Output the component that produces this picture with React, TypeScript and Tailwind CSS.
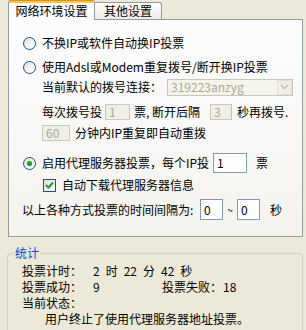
import React from "react";

// XP-style radio button
const Radio = ({ checked }: { checked?: boolean }) => (
  <span className="w-[13px] h-[13px] shrink-0 rounded-full border border-[#1C5180] bg-linear-to-br from-[#DCDCD7] via-[#F4F4F1] to-white flex items-center justify-center">
    {checked && <span className="w-[5px] h-[5px] rounded-full bg-[#21A121] shadow-[0_0_1px_#5ccf5c]" />}
  </span>
);

const CheckBox = () => (
  <span className="w-[13px] h-[13px] shrink-0 border border-[#1C5180] bg-linear-to-br from-[#DCDCD7] to-white flex items-center justify-center">
    <svg width="9" height="9" viewBox="0 0 9 9">
      <path d="M1 4 L3.5 6.5 L8 1.5" stroke="#21A121" strokeWidth="2" fill="none" />
    </svg>
  </span>
);

const Edit = ({
  value,
  disabled,
  className,
}: {
  value: string;
  disabled?: boolean;
  className: string;
}) => (
  <div
    className={`${className} shrink-0 border flex items-center pl-[3px] text-[12px] ${
      disabled
        ? "border-[#C9C7BA] bg-[#F0EFE6] text-[#ACA899]"
        : "border-[#7F9DB9] bg-white text-black"
    }`}
  >
    {value}
  </div>
);

export default function App() {
  return (
    <div className="w-[306px] h-[330px] overflow-hidden bg-[#ECE9D8] text-black text-[12px] leading-[14px] font-['Noto_Sans_CJK_SC',sans-serif]">
      {/* Tabs */}
      <div className="flex items-end pl-[8px] pt-[3px] h-[20px] relative z-10">
        <div className="w-[87px] h-[20px] bg-[#FCFCFE] border-x border-[#919B9C] rounded-t-[3px] flex flex-col">
          <div className="h-[1px] bg-[#E68B2C] rounded-t-[3px]" />
          <div className="h-[2px] bg-[#FFC73C]" />
          <div className="flex-1 flex items-center justify-center pb-[1px]">网络环境设置</div>
        </div>
        <div className="w-[67px] h-[17px] mb-[1px] border-t border-r border-[#919B9C] rounded-tr-[3px] bg-linear-to-b from-white to-[#ECEBE6] flex items-center justify-center">
          其他设置
        </div>
      </div>

      {/* Tab panel */}
      <div className="ml-[8px] w-[295px] h-[218px] -mt-[1px] border border-[#919B9C] bg-linear-to-b from-[#FCFCFE] to-[#F4F3EE] flex flex-col">
        <div className="mt-[13px] h-[20px] flex items-center pl-[14px]">
          <Radio />
          <span className="ml-[6px]">不换IP或软件自动换IP投票</span>
        </div>
        <div className="mt-[4px] h-[20px] flex items-center pl-[14px]">
          <Radio />
          <span className="ml-[6px]">使用Adsl或Modem重复拨号/断开换IP投票</span>
        </div>
        <div className="mt-[1px] h-[18px] flex items-center pl-[33px]">
          <span className="w-[125px]">当前默认的拨号连接：</span>
          <div className="w-[126px] h-[17px] border border-[#C9C7BA] bg-[#F5F4EA] flex items-center">
            <span className="flex-1 pl-[3px] text-[#ACA899]">319223anzyg</span>
            <span className="w-[15px] h-[15px] bg-[#F1EFE5] border border-[#E2E0D6] flex items-center justify-center">
              <svg width="9" height="6" viewBox="0 0 9 6">
                <path d="M1 1 L4.5 4.5 L8 1" stroke="#C4C2B7" strokeWidth="1.6" fill="none" />
              </svg>
            </span>
          </div>
        </div>
        <div className="mt-[7px] h-[18px] flex items-center pl-[33px]">
          <span className="w-[60px]">每次拨号投</span>
          <Edit value="1" disabled className="ml-[3px] w-[25px] h-[16px]" />
          <span className="ml-[4px] w-[72px] whitespace-pre">票, 断开后隔</span>
          <Edit value="3" disabled className="ml-[4px] w-[22px] h-[16px]" />
          <span className="ml-[5px]">秒再拨号.</span>
        </div>
        <div className="mt-[3px] h-[18px] flex items-center pl-[33px]">
          <Edit value="60" disabled className="w-[28px] h-[16px]" />
          <span className="ml-[5px]">分钟内IP重复即自动重拨</span>
        </div>
        <div className="mt-[11px] h-[20px] flex items-center pl-[14px]">
          <Radio checked />
          <span className="ml-[6px] w-[171px]">启用代理服务器投票，每个IP投</span>
          <Edit value="1" className="w-[34px] h-[20px]" />
          <span className="ml-[9px]">票</span>
        </div>
        <div className="mt-[3px] h-[18px] flex items-center pl-[34px]">
          <CheckBox />
          <span className="ml-[6px]">自动下载代理服务器信息</span>
        </div>
        <div className="mt-[5px] h-[21px] flex items-center pl-[13px]">
          <span className="w-[178px]">以上各种方式投票的时间间隔为:</span>
          <Edit value="0" className="w-[23px] h-[21px]" />
          <span className="w-[14px] text-center text-[10px]">~</span>
          <Edit value="0" className="w-[23px] h-[21px]" />
          <span className="ml-[10px]">秒</span>
        </div>
      </div>

      {/* Statistics group */}
      <fieldset className="ml-[7px] mt-[9px] w-[296px] h-[120px] border border-[#D0D0BF] rounded-[4px]">
        <legend className="ml-[6px] px-[1px] text-[#0046D5]">统计</legend>
        <div className="pl-[14px] pt-[3px]">
          <div className="h-[16px] flex items-center">
            <span className="w-[71px]">投票计时：</span>
            <span className="flex gap-[6px]">
              <span>2</span>
              <span>时</span>
              <span>22</span>
              <span>分</span>
              <span>42</span>
              <span>秒</span>
            </span>
          </div>
          <div className="h-[16px] flex items-center">
            <span className="w-[71px]">投票成功：</span>
            <span className="w-[69px]">9</span>
            <span className="w-[61px]">投票失败：</span>
            <span>18</span>
          </div>
          <div className="h-[16px] flex items-center">当前状态：</div>
          <div className="h-[16px] flex items-center pl-[23px]">用户终止了使用代理服务器地址投票。</div>
        </div>
      </fieldset>
    </div>
  );
}
